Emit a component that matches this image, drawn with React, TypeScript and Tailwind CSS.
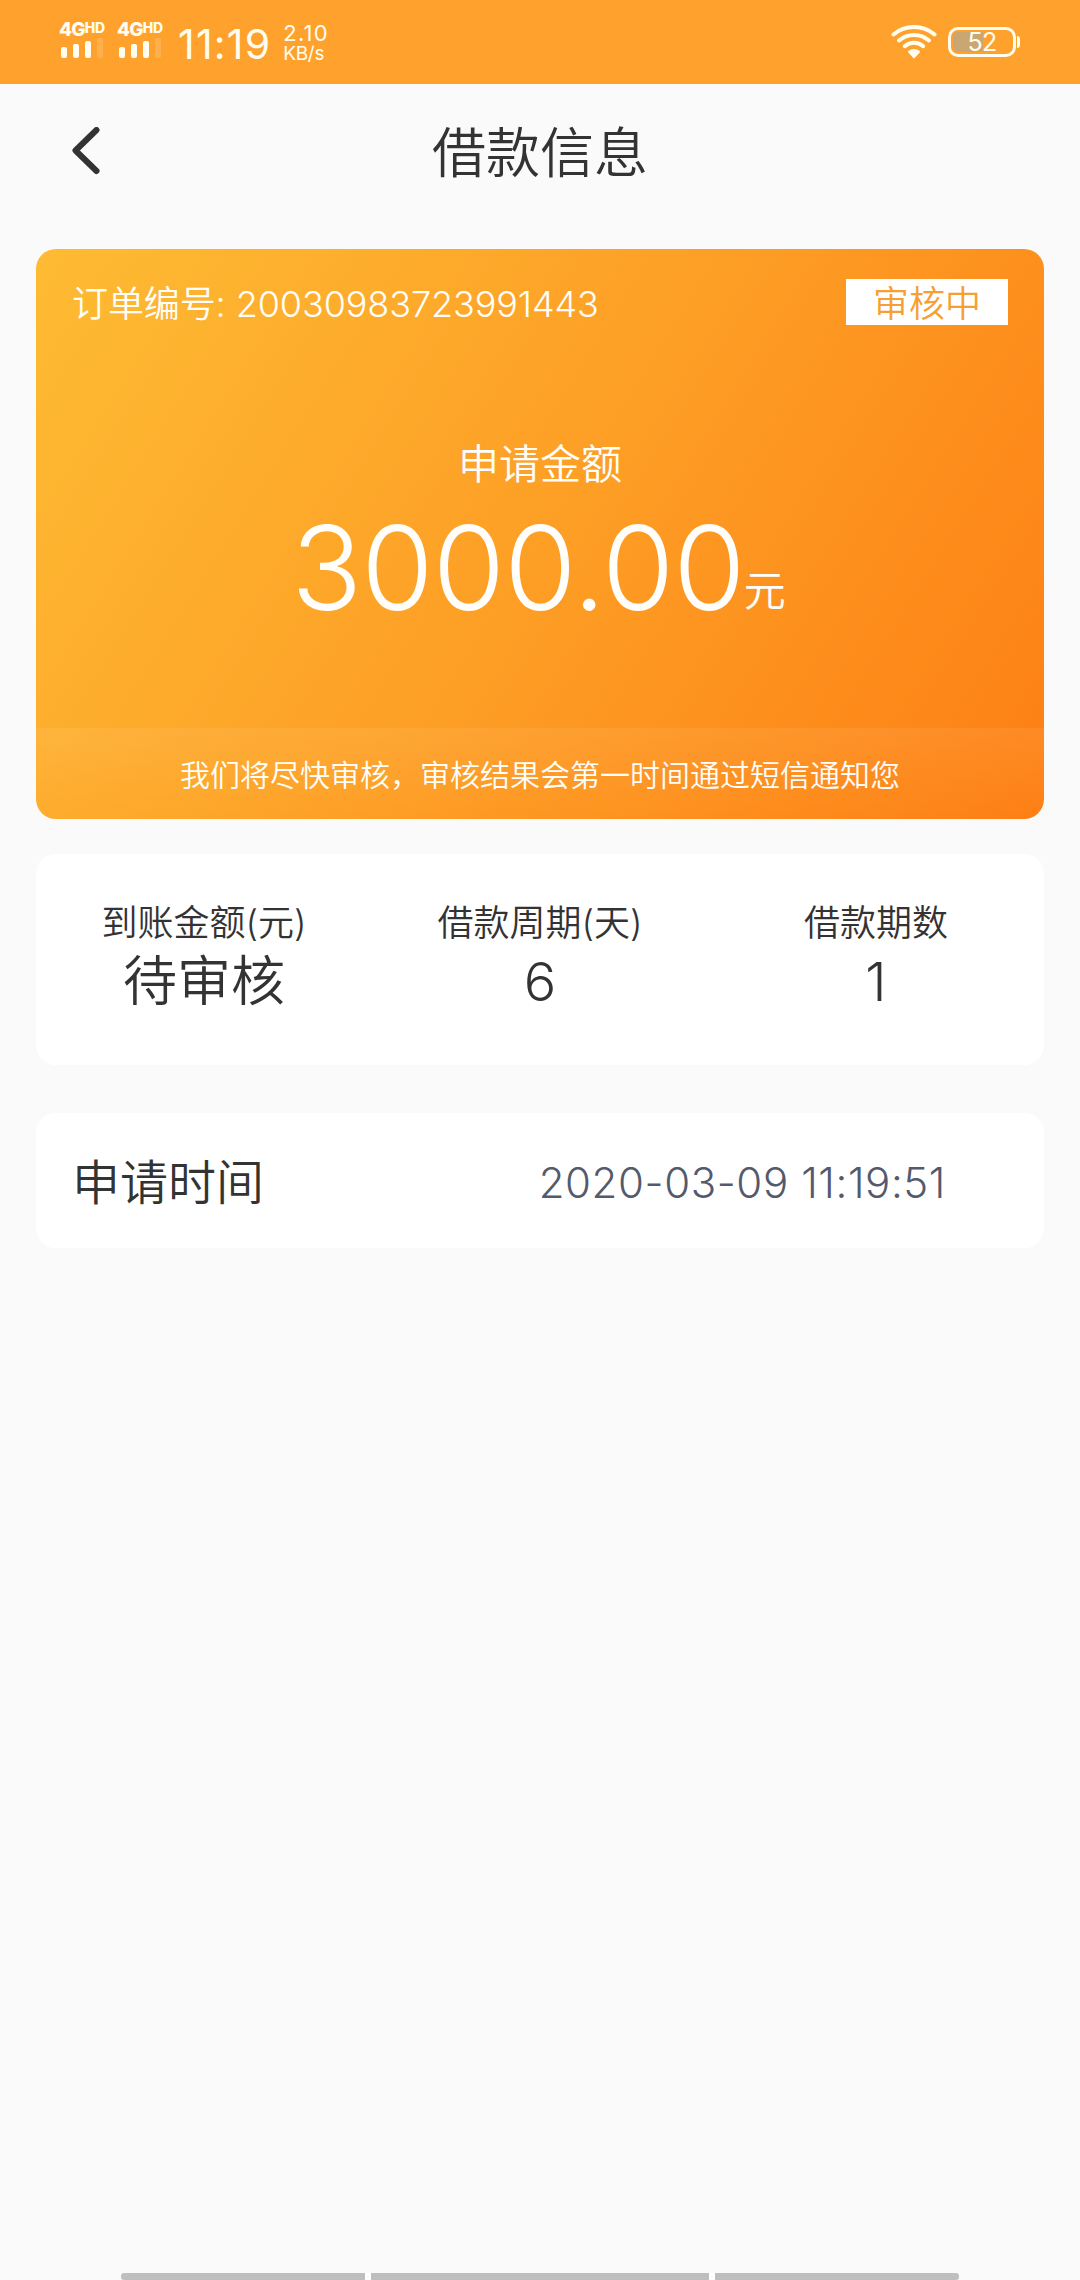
import React from 'react';

const summary = [
  { label: "到账金额(元)", value: "待审核" },
  { label: "借款周期(天)", value: "6" },
  { label: "借款期数", value: "1" },
];

function Signal() {
  return (
    <div className="w-[46px]">
      <div className="flex h-[18px] items-start font-extrabold leading-none">
        <span className="text-[19px] tracking-[-0.8px]">4G</span>
        <span className="text-[14px] leading-[15px] tracking-[-0.2px]">HD</span>
      </div>
      <div className="flex h-5 items-end gap-[6px] pl-[2px]">
        <div className="h-[11px] w-[6px] rounded-[2px] bg-[#fffdf0]" />
        <div className="h-[14px] w-[6px] rounded-[2px] bg-[#fffdf0]" />
        <div className="h-[17px] w-[6px] rounded-[2px] bg-[#fffdf0]" />
        <div className="h-[20px] w-[6px] rounded-[2px] bg-white/15" />
      </div>
    </div>
  );
}

function WifiIcon() {
  return (
    <svg className="h-[34px] w-[46px]" viewBox="0 0 46 34" fill="none" stroke="#fffdf0" strokeWidth="4" strokeLinecap="round">
      <path d="M2.5 9.5C14-0.5 32-0.5 43.5 9.5" />
      <path d="M8 15.5C16.5 8 29.5 8 38 15.5" />
      <path d="M13.8 21.2C19 16.5 27 16.5 32.2 21.2" />
      <path d="M23 32L18.2 26.8Q23 23.4 27.8 26.8Z" fill="#fffdf0" strokeWidth="2.4" strokeLinejoin="round" />
    </svg>
  );
}

function Battery() {
  return (
    <div className="flex items-center gap-px">
      <div className="relative h-[30px] w-[68px] overflow-hidden rounded-[10px] border-3 border-[#fffdf0] p-[2px]">
        <div className="h-full w-[30px] rounded-l-[5px] bg-[#c9a672]" />
        <span className="absolute inset-0 flex items-center justify-center text-[25px] leading-none tracking-[-0.8px]">52</span>
      </div>
      <div className="h-[12px] w-[3px] rounded-r-full bg-[#fffdf0]" />
    </div>
  );
}

function StatusBar() {
  return (
    <div className="flex h-[84px] items-start justify-between bg-[#ffa22d] pl-[59px] pr-[60px] text-[#fffdf0]">
      <div className="flex">
        <div className="flex gap-3 pt-[20px]">
          <Signal />
          <Signal />
        </div>
        <span className="ml-[15px] mt-[24px] text-[41px] leading-[40px] tracking-[1.2px]">11:19</span>
        <div className="ml-[12px] mt-[22px] flex flex-col">
          <span className="text-[22px] leading-[22px] tracking-[1.2px]">2.10</span>
          <span className="text-[19px] leading-[19px] tracking-[-0.3px]">KB/s</span>
        </div>
      </div>
      <div className="flex items-start gap-[11px] pt-[25px]">
        <WifiIcon />
        <div className="pt-[2px]">
          <Battery />
        </div>
      </div>
    </div>
  );
}

function LoanCard() {
  return (
    <section className="flex h-[570px] flex-col overflow-hidden rounded-[20px] bg-[linear-gradient(122deg,#febb33_0%,#fd9e25_52%,#fd7f14_100%)] text-[#fffefa]">
      <div className="mt-[30px] flex h-[46px] items-center justify-between px-9">
        <span className="pt-[3px] text-[36px] font-[350] leading-[46px] tracking-[-0.1px]">订单编号: 20030983723991443</span>
        <span className="h-[46px] w-[162px] bg-white pt-px text-center text-[36px] font-[350] leading-[48px] text-[#f7a032]">审核中</span>
      </div>
      <div className="mt-[109px] text-center text-[41px] font-[350] leading-[60px]">申请金额</div>
      <div className="mt-[14px] flex items-baseline justify-center leading-[120px]">
        <span className="text-[117px] font-light tracking-[-0.8px]">3000.00</span>
        <span className="-ml-px mr-[3px] -translate-y-1 text-[42px] font-[350] leading-[60px]">元</span>
      </div>
      <div className="mt-auto h-[91px] bg-linear-to-b from-white/7 to-white/0 text-center text-[30px] font-[350] leading-[95px]">
        我们将尽快审核，审核结果会第一时间通过短信通知您
      </div>
    </section>
  );
}

export default function App() {
  return (
    <div className="flex h-[2280px] w-[1080px] flex-col bg-[#fafafa] font-['Inter','Noto_Sans_CJK_SC',sans-serif] text-[#333333]">
      <StatusBar />

      <header className="grid h-[136px] grid-cols-3 items-center">
        <svg className="ml-[70px] h-[50px] w-8" viewBox="0 0 32 50" fill="none" stroke="#333333" strokeWidth="6" strokeLinecap="round" strokeLinejoin="round">
          <path d="M26.5 3L5.5 23.5L26.5 44" />
        </svg>
        <h1 className="pt-[3px] text-center text-[54px] font-[350] leading-[80px]">借款信息</h1>
      </header>

      <main className="flex flex-col px-9 pt-[29px]">
        <LoanCard />

        <section className="mt-[35px] grid h-[211px] grid-cols-3 rounded-[20px] bg-white pt-[43px] text-center">
          {summary.map((item) => (
            <div key={item.label}>
              <div className="text-[36px] font-[350] leading-[53px]">{item.label}</div>
              <div className="text-[54px] font-[350] leading-[63px]">{item.value}</div>
            </div>
          ))}
        </section>

        <section className="mt-12 flex h-[135px] items-center justify-between rounded-[20px] bg-white pl-9 pr-[98px] pt-[3px]">
          <span className="pt-[2px] text-[48px] font-[350]">申请时间</span>
          <span className="text-[42px] font-light tracking-[0.6px] text-[#545a6c]">2020-03-09 11:19:51</span>
        </section>
      </main>

      <div className="mx-auto mt-auto flex h-[7px] w-[838px] gap-[6px] overflow-hidden rounded-[3px] bg-white">
        <div className="w-[244px] bg-[#bfbfbf]" />
        <div className="w-[338px] bg-[#bfbfbf]" />
        <div className="w-[244px] bg-[#bfbfbf]" />
      </div>
    </div>
  );
}
